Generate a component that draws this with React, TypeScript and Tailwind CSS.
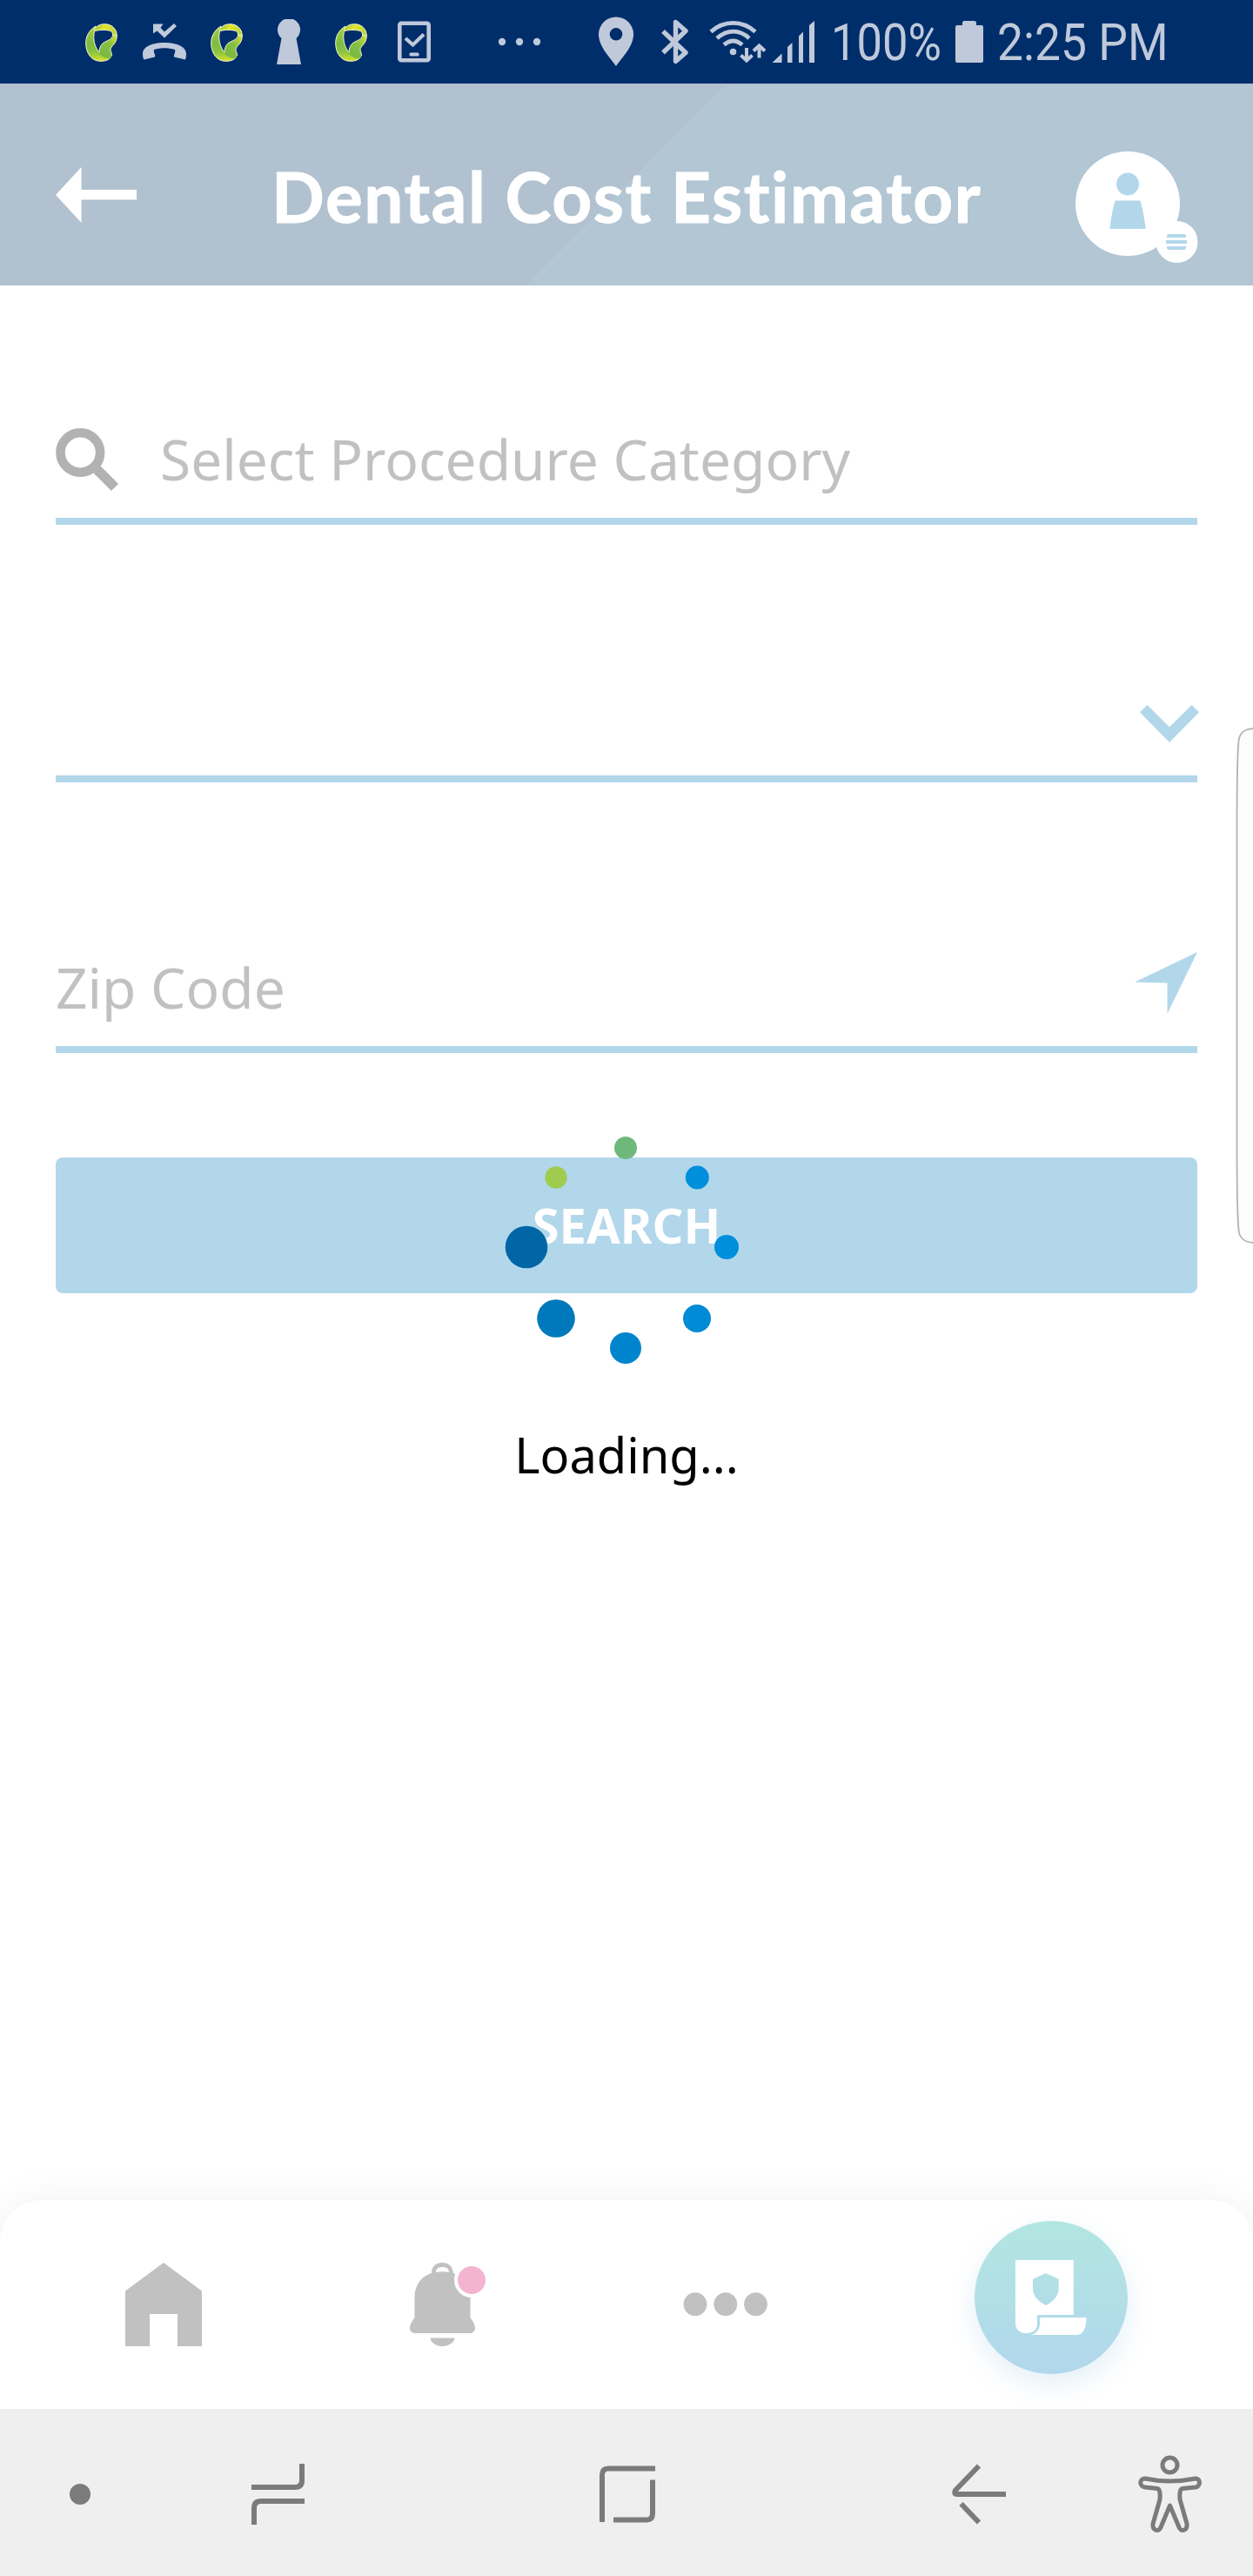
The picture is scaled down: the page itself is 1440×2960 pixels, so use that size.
import React from "react";

function LeafIcon() {
  return (
    <svg className="h-[44px] w-[38px] shrink-0" viewBox="0 0 38 44">
      <defs>
        <linearGradient id="band" x1="0" y1="0" x2="0" y2="1">
          <stop offset="0" stopColor="#a9cf3a" />
          <stop offset="0.5" stopColor="#7dbb42" />
          <stop offset="0.75" stopColor="#8cc43f" />
          <stop offset="1" stopColor="#d9e22f" />
        </linearGradient>
        <linearGradient id="crest" x1="0" y1="0" x2="1" y2="0.3">
          <stop offset="0" stopColor="#86bf40" />
          <stop offset="0.5" stopColor="#e3e52d" />
          <stop offset="1" stopColor="#b9d535" />
        </linearGradient>
        <linearGradient id="fold" x1="1" y1="0" x2="0.3" y2="1">
          <stop offset="0" stopColor="#dfe42e" />
          <stop offset="0.5" stopColor="#86c041" />
          <stop offset="1" stopColor="#78b943" />
        </linearGradient>
      </defs>
      <g strokeWidth="1" stroke="#f4f8d8" strokeLinejoin="round">
        <path fill="url(#band)" d="M12 3C4 8 .7 15 .7 22.500C.7 34 7 43.300 17.500 43.300C24 43.300 30 41 30 36L16 33C11.500 28 9.500 21 9.800 14C10 10 11 8 12 7.500Z" />
        <path fill="url(#fold)" stroke="none" d="M36.300 14C36.300 24 29 25.500 29 30C29 32.500 30.500 33 30.500 37C30.500 40 26 41 23 39.500C19 38 16.500 36 16 33C16.500 27 18 23.500 23 21C30 18 32.500 16 31.500 12Z" />
        <path fill="none" d="M36.300 14C36.300 24 29 25.500 29 30C29 32.500 30.500 33 30.500 37M16 33C16.500 27 18 23.500 23 21C29 18.500 32 16 31.500 12" />
        <path fill="url(#crest)" d="M10 8C12 3.500 16 .7 22.500 .7C31 .7 36.300 7 36.300 14L31.500 13C31.500 11.500 31 10 30 9C26 7 17 7 11.500 8.500Z" />
      </g>
    </svg>
  );
}

function StatusBar() {
  return (
    <div className="relative flex h-[96px] items-start bg-[#002e6b] text-[#bfc9da]">
      <div className="ml-[98px] mt-[27px] flex h-[44px] w-[39px]"><LeafIcon /></div>
      <svg className="ml-[26px] mt-[26px] h-[44px] w-[52px] shrink-0" viewBox="163 26 52 44">
        <path fill="currentColor" d="M164 62C164 54 174 49 189 49S214 54 214 62C214 65 213.500 67 213 68.500L200 65.500C199.500 62 202 61 201 57C193 54.500 185 54.500 177 57C176 61 179 62 178 65.500L165.500 68.500C164.500 67 164 65 164 62ZM176 27.500H187.500L184.500 32L189 36.500L200 27L203 30L189 43.500L180.500 35.500L176 38.500Z" />
      </svg>
      <div className="ml-[27px] mt-[27px] flex h-[44px] w-[39px]"><LeafIcon /></div>
      <svg className="ml-[37px] mt-[22px] h-[52px] w-[28px] shrink-0" viewBox="0 0 28 52">
        <path fill="currentColor" d="M5.500 22A13 13 0 1 1 22.500 22L28 52H0Z" />
      </svg>
      <div className="ml-[39px] mt-[27px] flex h-[44px] w-[39px]"><LeafIcon /></div>
      <svg className="ml-[33px] mt-[24px] h-[48px] w-[38px] shrink-0" viewBox="0 0 38 48">
        <rect x="2.300" y="2.800" width="33.400" height="42.500" rx="2" fill="none" stroke="currentColor" strokeWidth="4.600" />
        <path d="M9 20L17.500 27.500L30 15.500" fill="none" stroke="currentColor" strokeWidth="4.200" />
        <rect x="13.500" y="36.500" width="11" height="4" rx="1.500" fill="currentColor" />
      </svg>
      <svg className="ml-[77px] mt-[43px] h-[10px] w-[50px] shrink-0" viewBox="573 43 50 10">
        <g fill="currentColor"><circle cx="578" cy="48" r="4.200" /><circle cx="598" cy="48" r="4.200" /><circle cx="618" cy="48" r="4.200" /></g>
      </svg>
      <svg className="ml-[66px] mt-[19px] h-[58px] w-[40px] shrink-0" viewBox="0 0 40 58">
        <path fill="currentColor" fillRule="evenodd" d="M20 .5A20 20 0 0 1 40 20.500C40 35 26 48 20 57C14 48 0 35 0 20.500A20 20 0 0 1 20 .5ZM20 13A7.300 7.300 0 1 0 20 27.600A7.300 7.300 0 1 0 20 13Z" />
      </svg>
      <svg className="ml-[31px] mt-[22px] h-[52px] w-[34px] shrink-0" viewBox="760 22 34 52">
        <path d="M763 36L789 60.500L777.500 70.500V25.500L789 35.500L763 60.500" fill="none" stroke="currentColor" strokeWidth="5.400" strokeLinejoin="round" />
      </svg>
      <svg className="ml-[21px] mt-[22px] h-[52px] w-[68px] shrink-0" viewBox="815 22 68 52">
        <g fill="none" stroke="currentColor" strokeWidth="4.800">
          <path d="M818 36.500C833 23 854 23 869 36.500M825 44C837 33.500 851 33.500 862 44M833 51.500C840 45.500 847 45.500 854 51.500" />
          <path strokeWidth="4" d="M859 55V69M852.500 63.500L859 69.500L865.500 63.500M873.500 66.500V52.500M867 58.500L873.500 52.500L880 58.500" />
        </g>
        <circle cx="843.500" cy="59.500" r="3.800" fill="currentColor" />
      </svg>
      <svg className="ml-[5px] mt-[24px] h-[48px] w-[50px] shrink-0" viewBox="888 24 50 48">
        <path fill="currentColor" d="M888.500 72L899.500 61.500V72ZM906 54L911.500 49V72H906ZM919 41.500L924 36.500V72H919ZM931 29L937 24V72H931Z" />
      </svg>
      <span className="ml-[18px] mt-[14px] block h-[70px] w-[125px] origin-left scale-x-[0.875] whitespace-nowrap font-[Roboto,sans-serif] text-[60px] leading-[70px]">100%</span>
      <svg className="ml-[18px] mt-[24px] h-[48px] w-[32px] shrink-0" viewBox="0 0 32 48">
        <path fill="currentColor" d="M8 5V2Q8 0 10.500 0H21.500Q24 0 24 2V5H30Q32 5 32 7V46Q32 48 30 48H2Q0 48 0 46V7Q0 5 2 5Z" />
      </svg>
      <span className="ml-[16px] mt-[14px] block h-[70px] w-[200px] origin-left scale-x-[0.89] whitespace-nowrap font-[Roboto,sans-serif] text-[60px] leading-[70px]">2:25 PM</span>
    </div>
  );
}

function Header() {
  return (
    <header className="relative flex h-[232px] items-start border-t-2 border-[#b3bfd2] bg-[#b2c6d4]">
      <div className="absolute inset-0 bg-[#b1c1cf] [clip-path:polygon(0_0,834px_0,605px_100%,0_100%)]" />
      <svg className="relative ml-[64px] mt-[94px] h-[64px] w-[93px] shrink-0" viewBox="0 0 93 64">
        <path fill="#fff" d="M0 32L29.500 0V26H93V37.500H29.500V64Z" />
      </svg>
      <h1 className="relative ml-[155px] mt-[79px] w-[870px] whitespace-nowrap font-[Lato,sans-serif] text-[80px] font-bold leading-[96px] tracking-[1.6px] text-white [-webkit-text-stroke:1px_white]">Dental Cost Estimator</h1>
      <svg className="relative ml-[54px] mt-[76px] h-[130px] w-[142px] shrink-0" viewBox="1236 174 142 130">
        <circle cx="1296" cy="234" r="60" fill="#fff" />
        <circle cx="1352.500" cy="278" r="24" fill="#fff" />
        <g fill="#b2d7eb">
          <circle cx="1296" cy="211.500" r="13" />
          <path d="M1281.500 230.500H1310.500Q1315 246 1316.500 263H1275.500Q1277 246 1281.500 230.500ZM1342 269H1362L1363.500 273H1340.500ZM1340 276H1364V280H1340ZM1340.500 283H1363.500L1362 287H1342Z" />
        </g>
      </svg>
    </header>
  );
}

const dots = [
  [719, 1319, 13, "#6eb87b"],
  [639, 1353, 12.7, "#9fcc4f"],
  [801.3, 1353, 13.5, "#008fdb"],
  [835, 1433, 14, "#008fdb"],
  [801, 1515, 16, "#008bd6"],
  [719, 1549, 18, "#0085cd"],
  [639, 1515, 21.8, "#0078bc"],
  [605, 1433, 24.3, "#0066a6"],
] as const;

function Loader() {
  return (
    <div className="absolute left-[520px] top-[1300px] flex w-[400px] flex-col items-center">
      <svg className="h-[280px] w-[400px]" viewBox="520 1300 400 280">
        {dots.map(([x, y, r, c]) => <circle key={`${x}-${y}`} cx={x} cy={y} r={r} fill={c} />)}
      </svg>
      <p className="mt-[53px] text-[56px] leading-[76px] text-black">Loading...</p>
    </div>
  );
}

function Form() {
  return (
    <main className="flex h-[2200px] flex-col px-[64px]">
      <div className="flex h-[275px] items-end border-b-8 border-[#b2d7eb]">
        <svg className="mb-[30px] h-[74px] w-[74px] shrink-0" viewBox="64 491 74 74">
          <circle cx="92.300" cy="520" r="22.800" fill="none" stroke="#b2b2b2" strokeWidth="10.600" />
          <path d="M108 536L132 560" stroke="#b2b2b2" strokeWidth="11.500" />
        </svg>
        <span className="mb-[23px] ml-[46px] text-[64px] leading-[88px] text-[#c1c1c1]">Select Procedure Category</span>
      </div>
      <div className="flex h-[296px] items-end justify-end border-b-8 border-[#b2d7eb]">
        <svg className="-mr-[2px] mb-[38px] h-[43px] w-[68px]" viewBox="0 0 68 43">
          <path fill="#b2d7eb" d="M8.500 0L34 25.500L59.500 0L68 8.500L34 43L0 8.500Z" />
        </svg>
      </div>
      <div className="flex h-[311px] items-end justify-between border-b-8 border-[#b2d7eb]">
        <span className="mb-[23px] text-[64px] leading-[88px] text-[#c1c1c1]">Zip Code</span>
        <svg className="mb-[37px] h-[71px] w-[72px]" viewBox="0 0 72 71">
          <path fill="#b2d7eb" d="M72 0L37.500 71V35.500L0 34.500Z" />
        </svg>
      </div>
      <button className="mt-[120px] flex h-[156px] items-center justify-center rounded-[8px] bg-[#b2d7eb] pb-[2px] text-[56px] font-bold leading-[76px] text-white">SEARCH</button>
    </main>
  );
}

function TabBar() {
  return (
    <nav className="flex h-[240px] items-start rounded-t-[48px] bg-white shadow-[0_0_48px_rgba(0,0,0,0.06)]">
      <svg className="ml-[144px] mt-[72px] h-[96px] w-[88px] shrink-0" viewBox="0 0 88 96">
        <path fill="#c1c1c1" d="M44 0L88 32.500V96H60V59H28V96H0V32.500Z" />
      </svg>
      <svg className="ml-[238px] mt-[70px] h-[100px] w-[90px] shrink-0" viewBox="470 2598 90 100">
        <path fill="#c1c1c1" d="M476.500 2640C476.500 2625 485 2615 496 2612C496 2604 501 2600 508.500 2600S520 2604 521 2612C533 2615 540.500 2625 540.500 2640V2663C544 2668 546 2671 546 2675C546 2679 543 2681 539 2681H478C474 2681 471 2679 471 2675C471 2671 473 2668 476.500 2663ZM494.500 2686.500H522.500C522.500 2691 516 2696 508.500 2696S494.500 2691 494.500 2686.500Z" />
        <path fill="#fff" d="M501 2611C501 2607 504 2605 508.500 2605S516 2607 516 2611Q508.500 2609.500 501 2611Z" />
        <circle cx="542" cy="2620" r="20" fill="#fff" />
        <circle cx="542" cy="2620" r="16" fill="#f4b4cf" />
      </svg>
      <svg className="ml-[225px] mt-[106px] h-[28px] w-[98px] shrink-0" viewBox="784.500 2634 98 28">
        <g fill="#c1c1c1"><circle cx="798.500" cy="2647.700" r="13.400" /><circle cx="833.300" cy="2647.700" r="13.400" /><circle cx="868" cy="2647.700" r="13.400" /></g>
      </svg>
      <div className="ml-[237px] mt-[24px] h-[176px] w-[176px] shrink-0 rounded-full bg-linear-to-b from-[#b2e6e1] to-[#b2d7ec] shadow-[0_12px_32px_rgba(0,120,190,0.11)]">
        <svg className="h-[176px] w-[176px]" viewBox="1119.600 2552 176 176">
          <path fill="#fff" fillRule="evenodd" d="M1166.500 2597H1233.300V2660H1191.500V2670C1191.500 2677 1187 2681 1179 2681S1166.500 2676 1166.500 2669ZM1201.600 2612L1186.500 2619V2629C1186.500 2638 1193 2645 1201.600 2649C1210 2645 1216.300 2638 1216.300 2629V2619ZM1195 2663H1248C1248 2674 1245 2683 1237 2683H1185C1193 2680 1195 2676 1195 2663Z" />
        </svg>
      </div>
    </nav>
  );
}

function SystemBar() {
  return (
    <div className="flex h-[192px] items-start bg-[#efefef] text-[#7b7b7b]">
      <div className="ml-[80px] mt-[86px] h-[24px] w-[24px] shrink-0 rounded-full bg-[#7b7b7b]" />
      <svg className="ml-[184px] mt-[62px] h-[72px] w-[64px] shrink-0" viewBox="288 2830 64 72">
        <path fill="none" stroke="currentColor" strokeWidth="6" d="M347 2831V2850Q347 2858 339 2858H289M292 2901V2882Q292 2874 300 2874H350" />
      </svg>
      <svg className="ml-[336px] mt-[64px] h-[68px] w-[66px] shrink-0" viewBox="688 2832 66 68">
        <path fill="none" stroke="currentColor" strokeWidth="6" d="M692 2898V2844Q692 2836.500 699 2836.500H753M705 2895.500H743Q750 2895.500 750 2888V2849.500" />
      </svg>
      <svg className="ml-[339px] mt-[62px] h-[72px] w-[66px] shrink-0" viewBox="1092 2830 66 72">
        <path fill="none" stroke="currentColor" strokeWidth="6" strokeLinejoin="round" d="M1155 2866H1099Q1094.500 2866 1097 2861.500L1124 2833.500M1103.500 2877L1124 2898.500" />
      </svg>
      <svg className="ml-[147px] mt-[52px] h-[92px] w-[78px] shrink-0" viewBox="1305 2820 78 92">
        <g fill="none" stroke="currentColor" strokeWidth="5" strokeLinejoin="round">
          <circle cx="1343.500" cy="2832.500" r="8.500" />
          <path d="M1315 2848Q1343 2854 1373 2848C1379 2848 1379 2857 1373 2858L1358 2859.500Q1354 2860 1355 2872L1363 2900C1364 2908 1356 2910 1354 2904L1343.500 2879L1333 2904C1331 2910 1323 2908 1324 2900L1332 2872Q1333 2860 1329 2859.500L1315 2858C1308 2857 1308 2848 1315 2848Z" />
        </g>
      </svg>
    </div>
  );
}

export default function App() {
  return (
    <div className="relative flex h-[2960px] w-[1440px] flex-col overflow-hidden bg-white font-['Noto_Sans',sans-serif]">
      <StatusBar />
      <Header />
      <Form />
      <TabBar />
      <SystemBar />
      <Loader />
      <svg className="absolute left-[1418px] top-[834px] h-[597px] w-[22px]" viewBox="1418 834 22 597">
        <path fill="#fcfcfc" stroke="#b2b2b2" strokeWidth="1.800" d="M1442 837C1430 837 1424 843 1423.500 852Q1421.500 870 1421.500 950V1315Q1421.500 1395 1423.500 1413C1424 1422 1430 1428 1442 1428" />
      </svg>
    </div>
  );
}
